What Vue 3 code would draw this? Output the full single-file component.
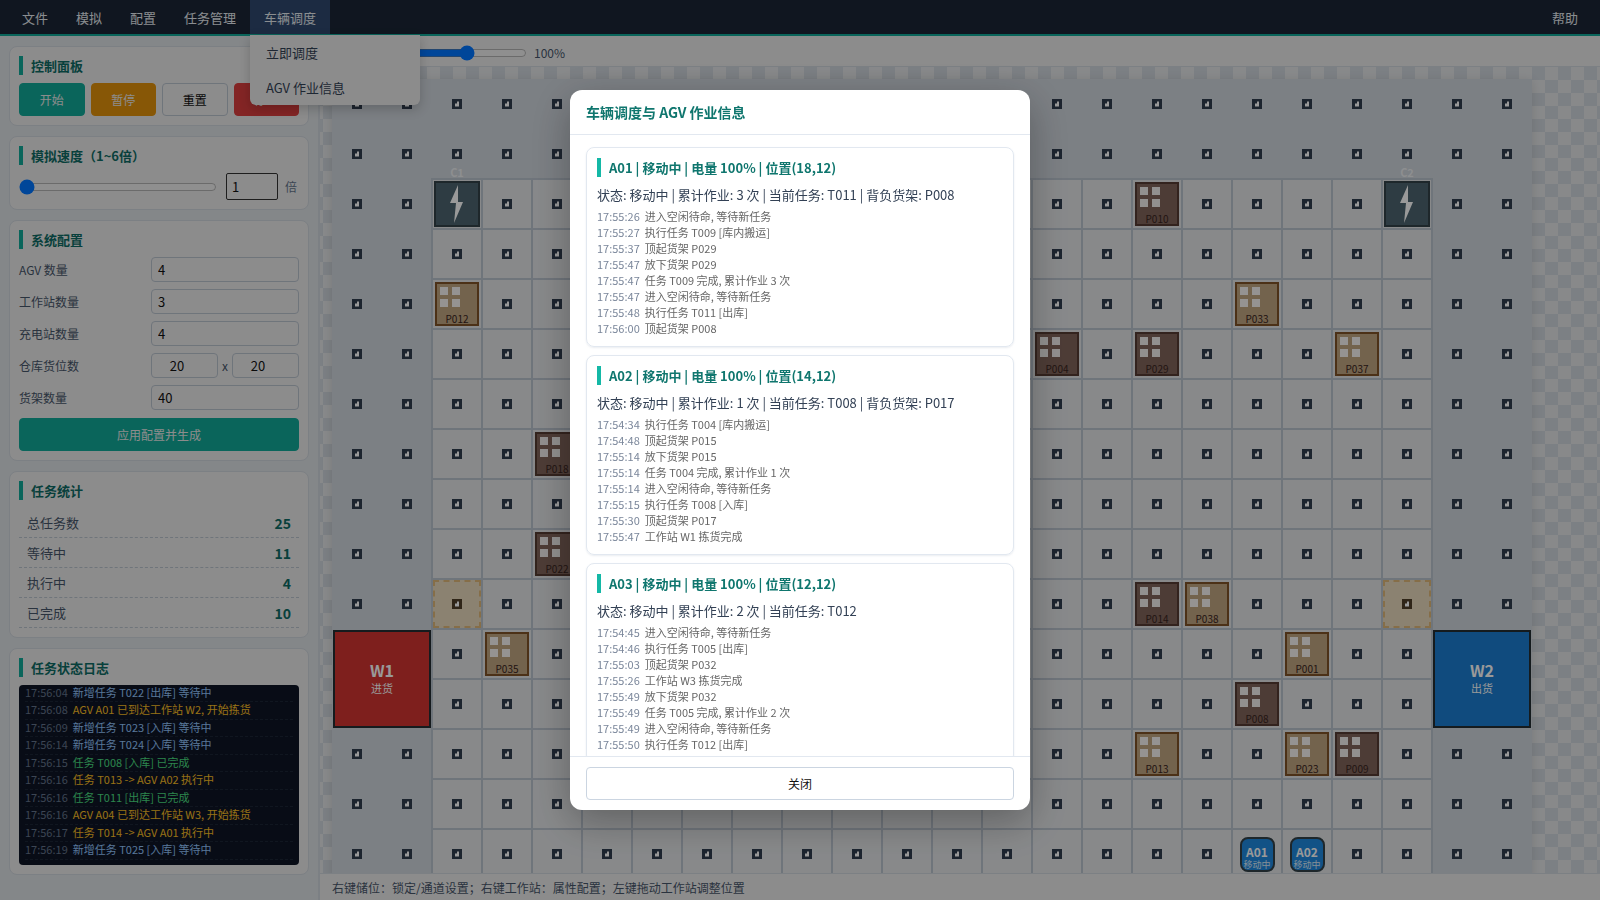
<script setup>
import { computed } from "vue";

const menus = ["文件", "模拟", "配置", "任务管理", "车辆调度"];

const stats = [
  { label: "总任务数", value: 25 },
  { label: "等待中", value: 11 },
  { label: "执行中", value: 4 },
  { label: "已完成", value: 10 },
];

const taskLogs = [
  { time: "17:56:04", text: "新增任务 T022 [出库] 等待中", type: "info" },
  { time: "17:56:08", text: "AGV A01 已到达工作站 W2, 开始拣货", type: "warn" },
  { time: "17:56:09", text: "新增任务 T023 [入库] 等待中", type: "info" },
  { time: "17:56:14", text: "新增任务 T024 [入库] 等待中", type: "info" },
  { time: "17:56:15", text: "任务 T008 [入库] 已完成", type: "ok" },
  { time: "17:56:16", text: "任务 T013 -> AGV A02 执行中", type: "warn" },
  { time: "17:56:16", text: "任务 T011 [出库] 已完成", type: "ok" },
  { time: "17:56:16", text: "AGV A04 已到达工作站 W3, 开始拣货", type: "warn" },
  { time: "17:56:17", text: "任务 T014 -> AGV A01 执行中", type: "warn" },
  { time: "17:56:19", text: "新增任务 T025 [入库] 等待中", type: "info" },
];

const agvCards = [
  {
    title: "A01 | 移动中 | 电量 100% | 位置(18,12)",
    status: "状态: 移动中 | 累计作业: 3 次 | 当前任务: T011 | 背负货架: P008",
    logs: [
      ["17:55:26", "进入空闲待命, 等待新任务"],
      ["17:55:27", "执行任务 T009 [库内搬运]"],
      ["17:55:37", "顶起货架 P029"],
      ["17:55:47", "放下货架 P029"],
      ["17:55:47", "任务 T009 完成, 累计作业 3 次"],
      ["17:55:47", "进入空闲待命, 等待新任务"],
      ["17:55:48", "执行任务 T011 [出库]"],
      ["17:56:00", "顶起货架 P008"],
    ],
  },
  {
    title: "A02 | 移动中 | 电量 100% | 位置(14,12)",
    status: "状态: 移动中 | 累计作业: 1 次 | 当前任务: T008 | 背负货架: P017",
    logs: [
      ["17:54:34", "执行任务 T004 [库内搬运]"],
      ["17:54:48", "顶起货架 P015"],
      ["17:55:14", "放下货架 P015"],
      ["17:55:14", "任务 T004 完成, 累计作业 1 次"],
      ["17:55:14", "进入空闲待命, 等待新任务"],
      ["17:55:15", "执行任务 T008 [入库]"],
      ["17:55:30", "顶起货架 P017"],
      ["17:55:47", "工作站 W1 拣货完成"],
    ],
  },
  {
    title: "A03 | 移动中 | 电量 100% | 位置(12,12)",
    status: "状态: 移动中 | 累计作业: 2 次 | 当前任务: T012",
    logs: [
      ["17:54:45", "进入空闲待命, 等待新任务"],
      ["17:54:46", "执行任务 T005 [出库]"],
      ["17:55:03", "顶起货架 P032"],
      ["17:55:26", "工作站 W3 拣货完成"],
      ["17:55:49", "放下货架 P032"],
      ["17:55:49", "任务 T005 完成, 累计作业 2 次"],
      ["17:55:49", "进入空闲待命, 等待新任务"],
      ["17:55:50", "执行任务 T012 [出库]"],
    ],
  },
];

// 地图数据: [列, 行, 编号]
const darkShelves = [
  [16, 2, "P010"], [14, 5, "P004"], [16, 5, "P029"], [4, 7, "P018"],
  [4, 9, "P022"], [16, 10, "P014"], [18, 12, "P008"], [20, 13, "P009"],
];
const lightShelves = [
  [2, 4, "P012"], [18, 4, "P033"], [20, 5, "P037"], [17, 10, "P038"],
  [3, 11, "P035"], [19, 11, "P001"], [16, 13, "P013"], [19, 13, "P023"],
];
const chargers = [[2, 2, "C1"], [21, 2, "C2"]];
const agvs = [[18, 15, "A01"], [19, 15, "A02"]];
const reserved = [[2, 10], [21, 10]];
const stations = [
  { id: "W1", sub: "进货", col: 0, row: 11, cls: "in" },
  { id: "W2", sub: "出货", col: 22, row: 11, cls: "out" },
];

const COLS = 24;
const ROWS = 16;

const cells = computed(() => {
  const map = {};
  darkShelves.forEach(([c, r, id]) => (map[c + "-" + r] = { kind: "shelf", id, dark: true }));
  lightShelves.forEach(([c, r, id]) => (map[c + "-" + r] = { kind: "shelf", id, dark: false }));
  chargers.forEach(([c, r, id]) => (map[c + "-" + r] = { kind: "charger", id }));
  agvs.forEach(([c, r, id]) => (map[c + "-" + r] = { kind: "agv", id }));
  reserved.forEach(([c, r]) => (map[c + "-" + r] = { kind: "reserved" }));

  const list = [];
  for (let r = 0; r < ROWS; r++) {
    for (let c = 0; c < COLS; c++) {
      const covered = stations.some(
        (s) => c >= s.col && c < s.col + 2 && r >= s.row && r < s.row + 2
      );
      if (covered) continue;
      const floor = c >= 2 && c <= 21 && r >= 2;
      list.push({ key: c + "-" + r, floor, ...(map[c + "-" + r] || { kind: "slot" }) });
    }
  }
  return list;
});
</script>

<template>
  <div class="app">
    <!-- 顶部菜单 -->
    <header class="menubar">
      <div
        v-for="(m, i) in menus"
        :key="m"
        class="menu-item"
        :class="{ active: i === 4 }"
      >
        {{ m }}
        <div v-if="i === 4" class="dropdown">
          <div class="drop-item">立即调度</div>
          <div class="drop-item">AGV 作业信息</div>
        </div>
      </div>
      <div class="menu-item help">帮助</div>
    </header>

    <div class="main">
      <!-- 左侧面板 -->
      <aside class="sidebar">
        <section class="card">
          <h3 class="card-title">控制面板</h3>
          <div class="ctrl-btns">
            <button class="btn primary">开始</button>
            <button class="btn amber">暂停</button>
            <button class="btn">重置</button>
            <button class="btn red">停止</button>
          </div>
        </section>

        <section class="card">
          <h3 class="card-title">模拟速度（1~6倍）</h3>
          <div class="speed-row">
            <input class="speed-slider" type="range" min="1" max="6" value="1" />
            <input class="speed-input" type="text" value="1" />
            <span class="speed-unit">倍</span>
          </div>
        </section>

        <section class="card">
          <h3 class="card-title">系统配置</h3>
          <div class="form">
            <label class="form-row"><span>AGV 数量</span><input class="field" type="text" value="4" /></label>
            <label class="form-row"><span>工作站数量</span><input class="field" type="text" value="3" /></label>
            <label class="form-row"><span>充电站数量</span><input class="field" type="text" value="4" /></label>
            <div class="form-row">
              <span>仓库货位数</span>
              <div class="size-pair">
                <input class="field num" type="number" value="20" />
                <span class="times">x</span>
                <input class="field num" type="number" value="20" />
              </div>
            </div>
            <label class="form-row"><span>货架数量</span><input class="field" type="text" value="40" /></label>
          </div>
          <button class="btn primary apply">应用配置并生成</button>
        </section>

        <section class="card">
          <h3 class="card-title">任务统计</h3>
          <div v-for="s in stats" :key="s.label" class="stat-row">
            <span>{{ s.label }}</span>
            <b>{{ s.value }}</b>
          </div>
        </section>

        <section class="card">
          <h3 class="card-title">任务状态日志</h3>
          <div class="log-box">
            <div v-for="(l, i) in taskLogs" :key="i" class="log-row">
              <span class="log-time">{{ l.time }}</span>
              <span :class="l.type">{{ l.text }}</span>
            </div>
          </div>
        </section>
      </aside>

      <!-- 地图区域 -->
      <div class="workspace">
        <div class="toolbar">
          <span class="zoom-label">地图缩放</span>
          <input class="zoom-slider" type="range" min="50" max="150" value="100" />
          <span class="zoom-value">100%</span>
        </div>

        <div class="canvas">
          <div class="grid">
            <div
              v-for="s in stations"
              :key="s.id"
              class="station-cell"
              :style="{ gridColumn: s.col + 1 + ' / span 2', gridRow: s.row + 1 + ' / span 2' }"
            >
              <div class="station" :class="s.cls">
                <b>{{ s.id }}</b>
                <span>{{ s.sub }}</span>
              </div>
            </div>

            <div
              v-for="cell in cells"
              :key="cell.key"
              class="cell"
              :class="{ floor: cell.floor, reserved: cell.kind === 'reserved' }"
            >
              <div v-if="cell.kind === 'slot' || cell.kind === 'reserved'" class="dot"></div>

              <div v-else-if="cell.kind === 'shelf'" class="shelf" :class="{ dark: cell.dark }">
                <div class="windows"><i></i><i></i><i></i><i></i></div>
                <div class="shelf-id">{{ cell.id }}</div>
              </div>

              <div v-else-if="cell.kind === 'charger'" class="charger">
                <span class="charger-id">{{ cell.id }}</span>
                <svg width="42" height="42" viewBox="0 0 42 42">
                  <path d="M22 2 L14 20 L20 20 L18 40 L27 19 L22 19 Z" fill="#fff" />
                </svg>
              </div>

              <div v-else-if="cell.kind === 'agv'" class="agv">
                <b>{{ cell.id }}</b>
                <span>移动中</span>
              </div>
            </div>
          </div>
        </div>

        <div class="statusbar">右键储位：锁定/通道设置；右键工作站：属性配置；左键拖动工作站调整位置</div>
      </div>
    </div>

    <!-- 弹窗 -->
    <div class="overlay">
      <div class="modal">
        <div class="modal-head">车辆调度与 AGV 作业信息</div>
        <div class="modal-body">
          <div v-for="a in agvCards" :key="a.title" class="agv-card">
            <h3 class="card-title">{{ a.title }}</h3>
            <div class="agv-status">{{ a.status }}</div>
            <div class="agv-logs">
              <div v-for="(l, i) in a.logs" :key="i" class="agv-log">
                <span class="agv-time">{{ l[0] }}</span>{{ l[1] }}
              </div>
            </div>
          </div>
        </div>
        <div class="modal-foot">
          <button class="btn close">关闭</button>
        </div>
      </div>
    </div>
  </div>
</template>

<style>
html,
body {
  margin: 0;
  overflow: hidden;
}
</style>

<style scoped>
.app {
  width: 1600px;
  height: 900px;
  display: flex;
  flex-direction: column;
  font-family: "Noto Sans CJK SC", "Noto Sans", sans-serif;
  color: #334155;
  overflow: hidden;
}

/* 顶部菜单 */
.menubar {
  height: 34px;
  flex: none;
  display: flex;
  padding: 0 8px;
  background: #1b2636;
  border-bottom: 2px solid #12a998;
  position: relative;
  z-index: 50;
}

.menu-item {
  position: relative;
  padding: 0 14px;
  line-height: 36px;
  height: 34px;
  font-size: 13px;
  color: #e6ebf0;
}

.menu-item.active {
  background: #2f486e;
}

.menu-item.help {
  margin-left: auto;
}

.dropdown {
  position: absolute;
  left: 0;
  top: 35px;
  width: 170px;
  background: #eaeaea;
  border-radius: 0 0 6px 6px;
  box-shadow: 0 4px 12px rgba(0, 0, 0, 0.2);
  color: #334155;
}

.drop-item {
  height: 35px;
  line-height: 36px;
  padding-left: 16px;
}

.main {
  flex: 1;
  min-height: 0;
  display: flex;
}

/* 左侧面板 */
.sidebar {
  width: 320px;
  flex: none;
  box-sizing: border-box;
  padding: 10px 9px;
  background: #dde1e4;
  border-right: 2px solid #cfd5dc;
  display: flex;
  flex-direction: column;
  gap: 10px;
  overflow: hidden;
}

.card {
  background: #eaeaea;
  border: 1px solid #cfd5dc;
  border-radius: 8px;
  padding: 9px;
}

.card-title {
  margin: 0 0 8px;
  padding-left: 8px;
  border-left: 4px solid #12a998;
  font-size: 13px;
  line-height: 19px;
  font-weight: 700;
  color: #0e6c65;
}

.btn {
  height: 33px;
  box-sizing: border-box;
  border: 1px solid #bac3ce;
  border-radius: 4px;
  background: #eaeaea;
  color: #111;
  font-family: inherit;
  font-size: 12px;
  padding: 0;
}

.btn.primary {
  background: #12a998;
  border-color: #12a998;
  color: #eaeaea;
}

.btn.amber {
  background: #e1910a;
  border-color: #e1910a;
  color: #eaeaea;
}

.btn.red {
  background: #db3e3e;
  border-color: #db3e3e;
  color: #eaeaea;
}

.ctrl-btns {
  display: grid;
  grid-template-columns: repeat(4, 1fr);
  gap: 6px;
}

.speed-row {
  display: flex;
  align-items: center;
  height: 27px;
}

.speed-slider {
  width: 198px;
  margin: 0 9px 0 0;
}

.speed-input {
  width: 52px;
  height: 27px;
  box-sizing: border-box;
  border: 1px solid #333;
  border-radius: 2px;
  padding: 0 5px;
  font-family: inherit;
  font-size: 13px;
  color: #111;
  background: #eaeaea;
}

.speed-unit {
  margin-left: 7px;
  font-size: 12px;
  color: #64748b;
}

.form {
  display: flex;
  flex-direction: column;
  gap: 7px;
}

.form-row {
  display: flex;
  align-items: center;
  justify-content: space-between;
  height: 25px;
  font-size: 12px;
  color: #475569;
}

.field {
  width: 148px;
  height: 25px;
  box-sizing: border-box;
  border: 1px solid #bac3ce;
  border-radius: 4px;
  padding: 0 6px;
  font-family: inherit;
  font-size: 13px;
  color: #111;
  background: #eaeaea;
}

.size-pair {
  width: 148px;
  display: flex;
  align-items: center;
  justify-content: space-between;
}

.field.num {
  width: 67px;
  text-align: center;
}

.times {
  font-size: 12px;
}

.apply {
  width: 100%;
  margin-top: 8px;
  display: block;
}

.stat-row {
  display: flex;
  justify-content: space-between;
  align-items: center;
  height: 29px;
  padding: 0 8px;
  border-bottom: 1px dashed #bac3ce;
  font-size: 13px;
  color: #475569;
}

.stat-row b {
  font-size: 14px;
  color: #0e6c65;
}

.log-box {
  height: 180px;
  background: #0e1526;
  border-radius: 4px;
  padding: 0 6px;
  overflow: hidden;
  font-size: 11px;
}

.log-row {
  height: 17.47px;
  line-height: 15px;
  box-sizing: border-box;
  border-bottom: 1px dashed #1b2636;
  white-space: nowrap;
  display: flex;
  gap: 5px;
}

.log-time {
  color: #64748b;
}

.info {
  color: #93c5fd;
}

.warn {
  color: #fbbf24;
}

.ok {
  color: #4ade80;
}

/* 地图区域 */
.workspace {
  flex: 1;
  min-width: 0;
  display: flex;
  flex-direction: column;
}

.toolbar {
  height: 31px;
  flex: none;
  box-sizing: border-box;
  display: flex;
  align-items: center;
  padding: 2px 0 0 12px;
  background: #eaeaea;
  border-bottom: 1px solid #cfd5dc;
  font-size: 12px;
  color: #475569;
}

.zoom-label {
  width: 74px;
}

.zoom-slider {
  width: 121px;
  margin: 1px 7px 0 0;
}

.canvas {
  flex: 1;
  min-height: 0;
  padding: 12px 0 0 12px;
  overflow: hidden;
  background: conic-gradient(#cfd5dc 25%, #e3e5e7 0 50%, #cfd5dc 0 75%, #e3e5e7 0) 3px 0 / 26px 26px;
}

.grid {
  display: grid;
  width: 1200px;
  grid-template-columns: repeat(24, 50px);
  grid-auto-rows: 50px;
  background: #cfd5dc;
  box-shadow: 0 2px 10px rgba(0, 0, 0, 0.12);
}

.cell {
  position: relative;
  box-sizing: border-box;
  display: flex;
  align-items: center;
  justify-content: center;
  border: 1px solid transparent;
}

.cell.floor {
  background: #e3e5e7;
  border-color: #bac3ce;
  box-shadow: 0 0 0 1px #bac3ce;
}

.cell.reserved::after {
  content: "";
  position: absolute;
  inset: 0;
  box-sizing: border-box;
  background: #e8d9bd;
  border: 2px dashed #e0b878;
}

.cell.reserved .dot {
  z-index: 1;
  background: #4f3f28;
}

.dot {
  position: relative;
  width: 10px;
  height: 10px;
  background: #2f3c4e;
}

.dot::after {
  content: "";
  position: absolute;
  inset: 0;
  background: #fff;
  clip-path: polygon(50% 25%, 70% 25%, 70% 75%, 30% 75%, 30% 45%, 50% 45%);
}

.station-cell {
  display: flex;
  align-items: center;
  justify-content: center;
  position: relative;
  z-index: 1;
}

.station {
  width: 98px;
  height: 98px;
  box-sizing: border-box;
  border: 2px solid #232e33;
  padding-bottom: 2px;
  display: flex;
  flex-direction: column;
  align-items: center;
  justify-content: center;
  color: #fff;
}

.station b {
  font-size: 16px;
  line-height: 20px;
}

.station span {
  font-size: 11px;
  line-height: 16px;
}

.station.in {
  background: #d23431;
}

.station.out {
  background: #1b7dd2;
}

.shelf {
  width: 44px;
  height: 44px;
  box-sizing: border-box;
  border: 2px solid #7f5327;
  background: #c0a580;
  padding: 3px;
  position: relative;
  z-index: 1;
}

.shelf.dark {
  border-color: #553b32;
  background: #81655b;
}

.windows {
  display: grid;
  grid-template-columns: 8px 8px;
  grid-auto-rows: 8px;
  gap: 4px;
}

.windows i {
  background: #fff;
  opacity: 0.9;
}

.shelf-id {
  margin: 6px -3px 0;
  text-align: center;
  font-size: 10px;
  line-height: 12px;
  color: #392420;
}

.charger {
  width: 46px;
  height: 46px;
  box-sizing: border-box;
  position: relative;
  z-index: 1;
  background: #4d6570;
  border: 2px solid #324148;
  display: flex;
  align-items: center;
  justify-content: center;
}

.charger-id {
  position: absolute;
  top: -18px;
  left: 0;
  right: 0;
  text-align: center;
  font-size: 11px;
  line-height: 14px;
  font-weight: 700;
  color: #fff;
  opacity: 0.6;
}

.agv {
  width: 35px;
  height: 35px;
  box-sizing: border-box;
  position: relative;
  z-index: 1;
  border: 2px solid #324148;
  border-radius: 8px;
  background: #1e89df;
  color: #fff;
  display: flex;
  flex-direction: column;
  align-items: center;
  white-space: nowrap;
}

.agv b {
  font-size: 12px;
  line-height: 15px;
  margin-top: 5px;
}

.agv span {
  font-size: 9px;
  line-height: 12px;
  opacity: 0.85;
}

.statusbar {
  height: 27px;
  flex: none;
  box-sizing: border-box;
  position: relative;
  z-index: 2;
  padding-left: 12px;
  line-height: 27px;
  background: #eaeaea;
  border-top: 1px solid #cfd5dc;
  font-size: 12px;
  color: #475569;
}

/* 弹窗 */
.overlay {
  position: fixed;
  inset: 0;
  z-index: 100;
  background: rgba(0, 0, 0, 0.4);
  display: flex;
  align-items: center;
  justify-content: center;
}

.modal {
  width: 460px;
  height: 720px;
  display: flex;
  flex-direction: column;
  background: #fff;
  border-radius: 12px;
  box-shadow: 0 12px 40px rgba(0, 0, 0, 0.3);
  overflow: hidden;
}

.modal-head {
  height: 44px;
  flex: none;
  padding-left: 16px;
  line-height: 45px;
  font-size: 14px;
  font-weight: 700;
  color: #0f766e;
  border-bottom: 1px solid #e2e8f0;
}

.modal-body {
  flex: 1;
  min-height: 0;
  padding: 12px 16px;
  overflow: hidden;
  display: flex;
  flex-direction: column;
  gap: 8px;
}

.agv-card {
  flex: none;
  border: 1px solid #e2e8f0;
  border-radius: 8px;
  padding: 10px;
  height: 200px;
  box-sizing: border-box;
  box-shadow: 0 1px 2px rgba(148, 163, 184, 0.2);
}

.agv-card .card-title {
  border-left-color: #14b8a6;
  color: #0f766e;
}

.agv-status {
  font-size: 13px;
  line-height: 19px;
  color: #334155;
}

.agv-logs {
  margin-top: 4px;
}

.agv-log {
  font-size: 11px;
  line-height: 16px;
  color: #666;
  white-space: nowrap;
}

.agv-time {
  color: #7a869a;
  margin-right: 5px;
}

.modal-foot {
  flex: none;
  padding: 10px 16px;
  border-top: 1px solid #e2e8f0;
}

.btn.close {
  width: 100%;
  display: block;
  background: #fff;
  border-color: #cbd5e1;
  color: #111;
}
</style>
